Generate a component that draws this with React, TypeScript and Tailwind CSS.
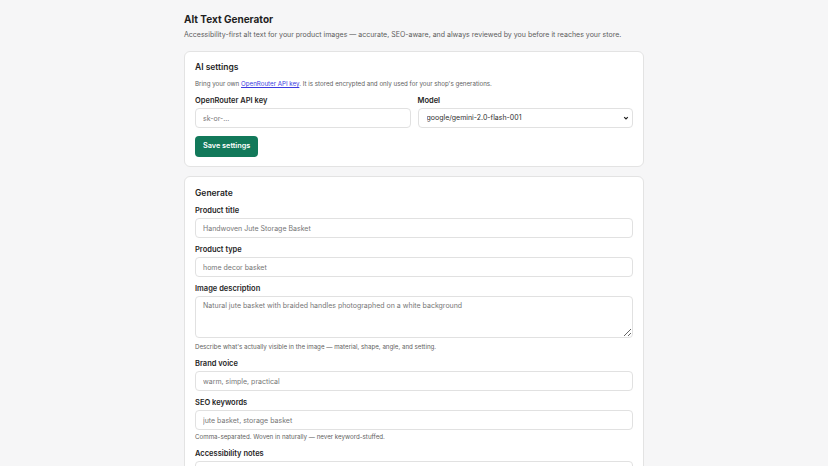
const inputCls =
  "block h-[20px] w-full rounded-[4px] border border-[#e1e1e1] bg-white px-[7px] text-[7px] text-[#303030] placeholder:text-[#767676] outline-none";

const labelCls = "block text-[7.5px] leading-[10px] font-semibold text-[#1f1f1f]";

function Field({ label, placeholder, help }: { label: string; placeholder: string; help?: string }) {
  return (
    <div className="mt-[7px]">
      <label className={labelCls}>{label}</label>
      <input className={`mt-[2px] ${inputCls}`} placeholder={placeholder} />
      {help && <p className="mt-[2px] text-[6.2px] leading-[10px] text-[#616161]">{help}</p>}
    </div>
  );
}

export default function App() {
  return (
    <div className="min-h-[466px] bg-[#f6f6f7] pt-[12px] pb-6 font-['Inter',sans-serif] text-[#303030]">
      <div className="mx-auto w-[460px]">
        <h1 className="text-[10px] leading-[14px] font-bold text-[#1f1f1f]">Alt Text Generator</h1>
        <p className="mt-[4px] text-[7px] leading-[10px] text-[#5c5c5c]">
          Accessibility-first alt text for your product images — accurate, SEO-aware, and always reviewed by you before
          it reaches your store.
        </p>

        <section className="mt-[11px] rounded-[6px] border border-[#e3e3e3] bg-white px-[10px] pt-[10px] pb-[9px]">
          <h2 className="text-[8.5px] leading-[10px] font-semibold text-[#1f1f1f]">AI settings</h2>
          <p className="mt-[7px] text-[6.2px] leading-[9px] text-[#616161]">
            Bring your own{" "}
            <a href="#" className="text-[#3b3bdf] underline">
              OpenRouter API key
            </a>
            . It is stored encrypted and only used for your shop's generations.
          </p>
          <div className="mt-[8px] grid grid-cols-2 gap-[7px]">
            <div>
              <label className={labelCls}>OpenRouter API key</label>
              <input className={`mt-[2px] ${inputCls}`} placeholder="sk-or-..." />
            </div>
            <div>
              <label className={labelCls}>Model</label>
              <div className="relative mt-[2px]">
                <select
                  className={`${inputCls} appearance-none pl-[8px] text-[#1f1f1f]`}
                  defaultValue="google/gemini-2.0-flash-001"
                >
                  <option>google/gemini-2.0-flash-001</option>
                  <option>anthropic/claude-3.5-sonnet</option>
                  <option>openai/gpt-4o-mini</option>
                </select>
                <svg
                  className="pointer-events-none absolute top-1/2 right-[4px] h-[6px] w-[6px] -translate-y-1/2"
                  viewBox="0 0 10 10"
                  fill="none"
                  stroke="#1f1f1f"
                  strokeWidth="2"
                >
                  <path d="M2 3.5 5 6.5 8 3.5" />
                </svg>
              </div>
            </div>
          </div>
          <button className="mt-[8px] h-[21px] rounded-[4px] bg-[#12795a] px-[8px] text-[7.3px] font-semibold text-white">
            Save settings
          </button>
        </section>

        <section className="mt-[9px] rounded-[6px] border border-[#e3e3e3] bg-white p-[10px]">
          <h2 className="text-[8.5px] leading-[12px] font-semibold text-[#1f1f1f]">Generate</h2>
          <Field label="Product title" placeholder="Handwoven Jute Storage Basket" />
          <Field label="Product type" placeholder="home decor basket" />
          <div className="mt-[7px]">
            <label className={labelCls}>Image description</label>
            <textarea
              className="mt-[2px] block h-[42px] w-full rounded-[4px] border border-[#e1e1e1] bg-white px-[7px] py-[4px] text-[7px] text-[#303030] placeholder:text-[#767676] outline-none"
              placeholder="Natural jute basket with braided handles photographed on a white background"
            />
            <p className="mt-[4px] text-[6.2px] leading-[10px] text-[#616161]">
              Describe what's actually visible in the image — material, shape, angle, and setting.
            </p>
          </div>
          <Field label="Brand voice" placeholder="warm, simple, practical" />
          <Field
            label="SEO keywords"
            placeholder="jute basket, storage basket"
            help="Comma-separated. Woven in naturally — never keyword-stuffed."
          />
          <Field label="Accessibility notes" placeholder="Anything screen-reader users should know" />
        </section>
      </div>
    </div>
  );
}
